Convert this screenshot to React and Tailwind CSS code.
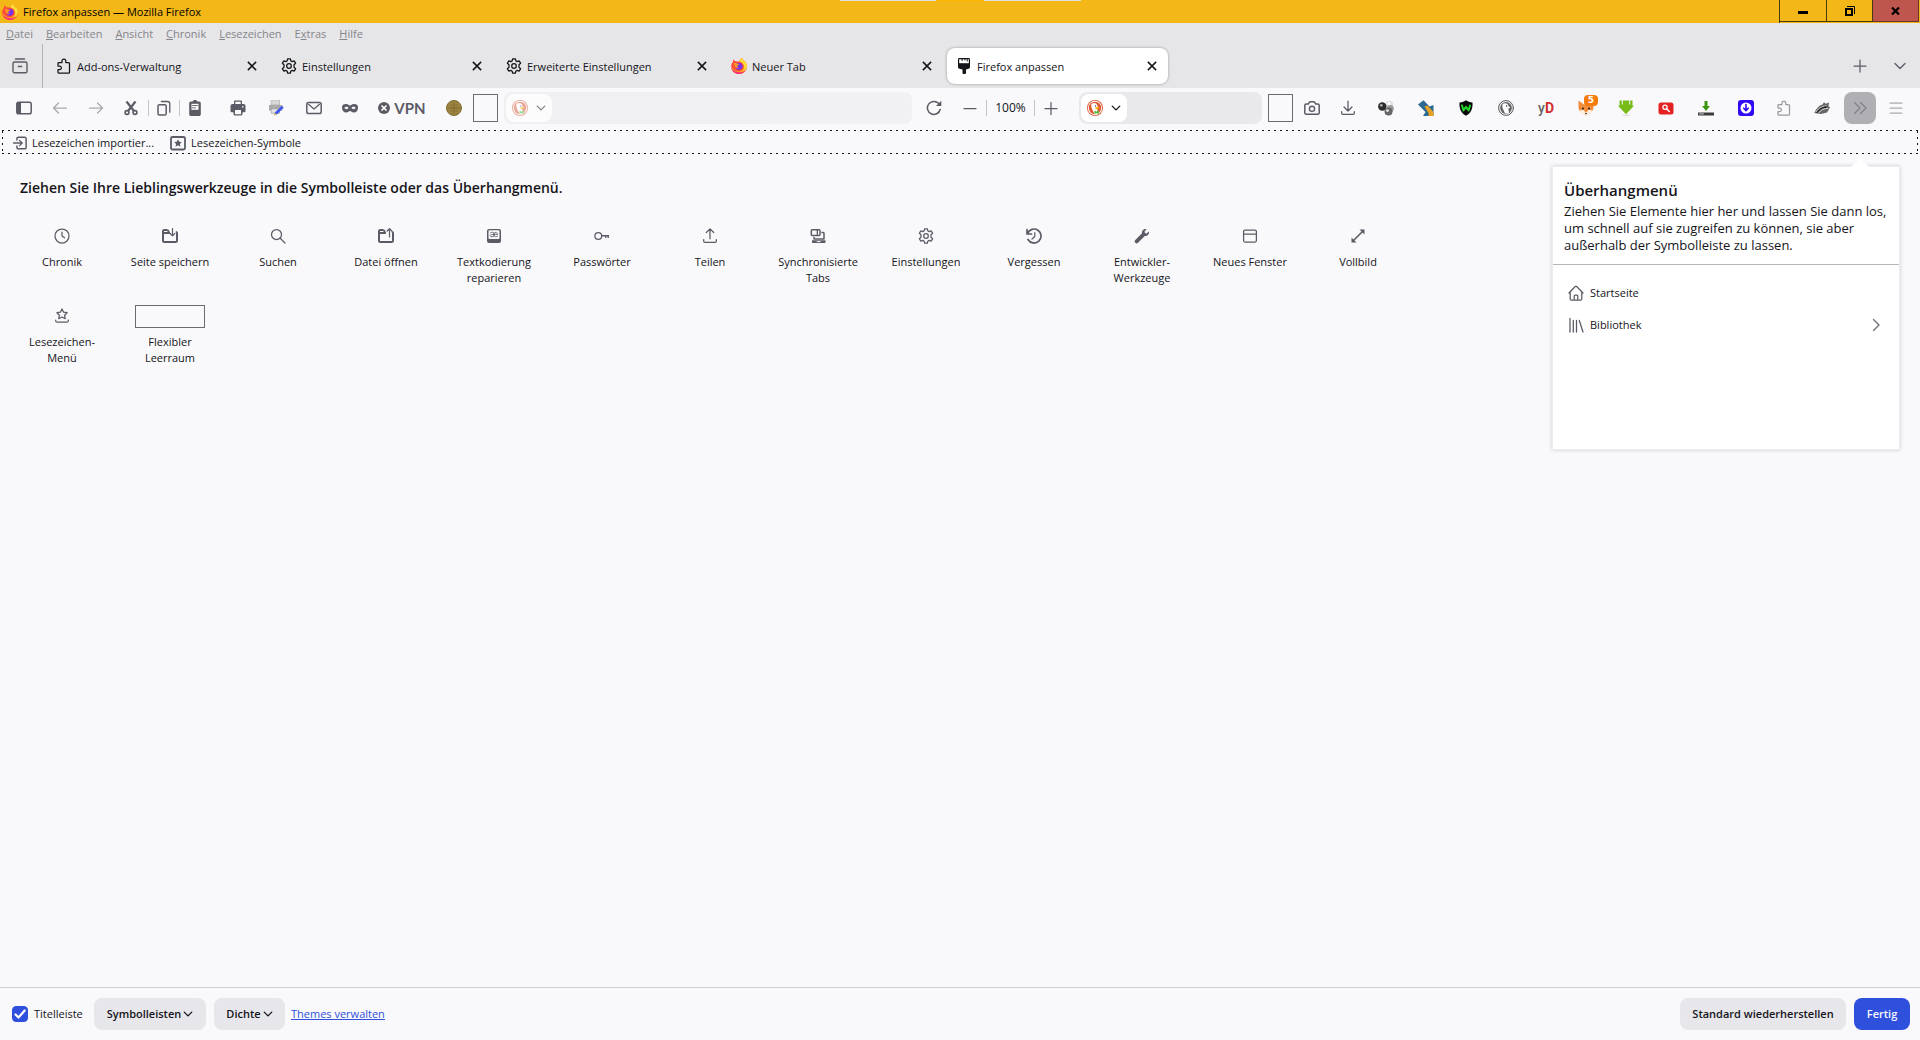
import React from "react";

function Svg({ children, className = "", size = "h-4 w-4" }) {
  return (
    <svg viewBox="0 0 16 16" className={`${size} shrink-0 ${className}`} fill="none" stroke="currentColor" strokeWidth="1.25" strokeLinecap="round" strokeLinejoin="round" aria-hidden="true">
      {children}
    </svg>
  );
}

const Firefox = () => (
  <Svg>
    <g stroke="none">
      <path d="M8 16c4.400 0 7.800-3.300 7.800-7.700 0-2.500-1-4.300-2.200-5.600.2.600.3 1.100.3 1.600C13 2.300 11.100 1.700 10.900 0 9.400.9 8.500 2.200 8.300 3.500 7 3.400 5.700 3.500 4.600 3.200 3.500 2.900 3 2 2.800 1.200 2 2 1.900 3 2 3.800.9 4.900.2 6.500.2 8.300.2 12.700 3.600 16 8 16z" fill="#ff4b3a" />
      <path d="M8 16c4.400 0 7.800-3.300 7.800-7.700 0-2.500-1-4.300-2.200-5.600.2.600.3 1.100.3 1.600C13 2.300 11.100 1.700 10.900 0 9.400.9 8.500 2.200 8.300 3.500c2.600.4 4.300 2.400 4.300 4.800 0 3-2.200 4.900-4.800 4.900S2.500 12 1.900 9.500L.5 10.500C1.300 13.700 4.300 16 8 16z" fill="#ff9a1f" />
      <path d="M10.900 0C9.400.9 8.500 2.200 8.300 3.500c3 .5 5.200 3 5 6-.1 1.600-.9 2.900-2 3.800 2.700-.8 4.500-2.900 4.500-5.600 0-2.100-1-3.800-2.200-5 .2.600.3 1.100.3 1.600C13 2.300 11.100 1.700 10.900 0z" fill="#ffdf3b" />
      <path d="M.4 10C1.200 13.500 4.300 16 8 16c3.200 0 5.900-1.700 7.100-4.300-1.700 2-4.200 2.800-7 2.600C4.500 14 2 12.500.4 10z" fill="#fb2d7c" />
      <circle cx="8" cy="8.300" r="3.400" fill="#7a32e8" />
      <path d="M2.600 5.500c1.200-.6 2.700-.5 3.500.3.700 0 1.700 0 2 .4-.2.700-1.400 1-1.700 1.300-.3.500-.1 1.700 1.300 2-1.300 1-3.600.2-3.900-1.700z" fill="#ff9a1f" />
    </g>
  </Svg>
);
const Puzzle = ({ className }) => (
  <Svg className={className}>
    <path d="M6 4.500V3a1.900 1.900 0 0 1 3.800 0v1.500h2.700a1 1 0 0 1 1 1v8.700a1 1 0 0 1-1 1H3a1 1 0 0 1-1-1v-2.700h1.700a1.700 1.700 0 0 0 0-3.400H2V5.500a1 1 0 0 1 1-1z" />
  </Svg>
);
const Gear = ({ className }) => (
  <Svg className={className}>
    <path d="M6.600.8h2.800l.4 2 1.300.8 2-.8 1.500 2.400-1.600 1.500v2.600l1.600 1.500-1.500 2.400-2-.8-1.300.8-.4 2H6.600l-.4-2-1.300-.8-2 .8-1.500-2.400L3 9.300V6.700L1.400 5.200l1.500-2.400 2 .8 1.300-.8z" />
    <circle cx="8" cy="8" r="2.300" />
  </Svg>
);
const Brush = () => (
  <Svg>
    <g stroke="none">
      <path d="M2 1.200A1.200 1.200 0 0 1 3.200 0h9.600A1.200 1.200 0 0 1 14 1.200V9c0 .8-.5 1.500-1.300 1.700L10 11.500V15a1 1 0 0 1-1 1H7.500a1 1 0 0 1-1-1v-3.500l-3.200-.8C2.500 10.500 2 9.800 2 9z" fill="#15141a" />
      <path d="M3.200 1.200h9.600v4H3.200z" fill="#fff" />
      <path d="M5.500 1h1.200v1.800H5.500zM8.300 1h1.200v1.200H8.300zM10.700 1h1v2.500h-1z" fill="#15141a" />
    </g>
  </Svg>
);
const CloseX = () => (
  <Svg size="h-3 w-3"><path d="M2.500 2.500l11 11M13.500 2.500l-11 11" strokeWidth="2" strokeLinecap="butt" /></Svg>
);
const ChevronDown = ({ className = "" }) => (
  <Svg className={className}><path d="M3 5.500l5 5 5-5" /></Svg>
);
const SmallChevron = ({ size = "h-[10px] w-[10px]" }) => (
  <Svg size={size}><path d="M2 5l6 6 6-6" strokeWidth="2.200" /></Svg>
);
const Duck = ({ className = "" }) => (
  <Svg className={className}>
    <g stroke="none">
      <circle cx="8" cy="8" r="8" fill="#de5833" />
      <circle cx="8" cy="8" r="7.200" fill="#fff" />
      <circle cx="8" cy="8" r="6.200" fill="#de5833" />
      <path d="M4.800 3.800C7 2.300 10 3 10.600 6c.3 1.500-.3 2.200-.3 3.500l.8 4.300c-1.300.5-3 .4-3.700 0C6.500 11.500 4.500 9 4.300 6.500c0-.9-.3-2 .5-2.700z" fill="#fff" />
      <circle cx="8.500" cy="6" r=".7" fill="#2d4f8e" />
      <path d="M8.500 7.300c1.600-.3 3.500-.3 3.800.3.200.8-2 1.600-3.800 1.800z" fill="#fdb50a" />
      <path d="M7.500 10.800l2 .8 2.500-.9v3l-2.500-.4-2 .6z" fill="#4cba3c" />
    </g>
  </Svg>
);
const MonoDuck = () => (
  <Svg>
    <circle cx="8" cy="8" r="7.400" stroke="#555" strokeWidth="1" />
    <circle cx="8" cy="8" r="5.900" fill="#666" stroke="none" />
    <path d="M4.700 4C7 2.300 10.300 3.200 10.600 6.200l1.800 1.200-2 1 .6 4.800c-1.300.6-3.300.5-4 0L5.500 10C4.300 8 4 5.500 4.700 4z" fill="#fff" stroke="none" />
    <circle cx="8.600" cy="6" r=".7" fill="#333" stroke="none" />
  </Svg>
);
const Clock = () => <Svg><circle cx="8" cy="8" r="7" /><path d="M8 4v4l2.500 1.800" /></Svg>;
const FolderDown = () => (
  <Svg>
    <path d="M5.500 2H2.300c-.7 0-1.300.6-1.300 1.300v9.400c0 .7.600 1.300 1.300 1.300h11.400c.7 0 1.300-.6 1.300-1.300V5.300c0-.7-.5-1.300-1.200-1.300M5.500 2l1.500 2M1.500 5H8" strokeWidth="2" strokeLinecap="butt" />
    <path d="M10.500.7v7M8.200 5.500l2.300 2.300 2.300-2.300" strokeWidth="1.200" />
  </Svg>
);
const FolderUp = () => (
  <Svg>
    <path d="M5.500 2H2.300c-.7 0-1.300.6-1.300 1.300v9.400c0 .7.600 1.300 1.300 1.300h11.400c.7 0 1.300-.6 1.300-1.300V5.300c0-.7-.5-1.300-1.200-1.300M5.500 2l1.500 2M1.500 5H8" strokeWidth="2" strokeLinecap="butt" />
    <path d="M11.500 9V.8M9.200 3l2.300-2.300L13.800 3" strokeWidth="1.200" />
  </Svg>
);
const Magnifier = () => <Svg><circle cx="6.500" cy="6.500" r="5" /><path d="M10.200 10.200l4.800 4.800" /></Svg>;
const TextCode = () => (
  <Svg>
    <path d="M3 1h10c1.100 0 2 .9 2 2v10c0 1.100-.9 2-2 2H3c-1.100 0-2-.9-2-2V3c0-1.100.9-2 2-2zm.5 1.300a1 1 0 0 0-1 1V10a1 1 0 0 0 1 1h9a1 1 0 0 0 1-1V3.300a1 1 0 0 0-1-1z" fill="currentColor" fillRule="evenodd" stroke="none" />
    <path d="M4.500 4.800C5.500 4 8 4 8 5.500V8c-1 1.200-3.700 1-3.700-.3S6 6.500 11.500 6.400C11.600 4 8 4 8 5.500M8 7.500c.5 1.500 2.500 1.500 3.500.8" strokeWidth=".9" />
  </Svg>
);
const Key = () => <Svg><circle cx="4.300" cy="8" r="3.400" /><path d="M7.700 7.800H15M14.200 8v2M11.700 8v1.700" strokeLinecap="butt" strokeWidth="1.400" /></Svg>;
const Share = () => <Svg><path d="M8 10.800V1M4.300 4.500L8 .9l3.700 3.600M1.700 11.500v1.700c0 .7.500 1.200 1.200 1.200h10.200c.7 0 1.200-.5 1.200-1.200v-1.700" /></Svg>;
const Synced = () => (
  <Svg>
    <rect x="1.300" y="1.800" width="8.700" height="5.700" rx="1" strokeWidth="1.500" />
    <path d="M7.300 2.500v4.500" strokeWidth="1.300" />
    <path d="M12 4.500h1.200c.5 0 .8.300.8.800V11H4V9.500" strokeWidth="1.500" />
    <path d="M2 12.300h13.500v2c0 .5-.3.800-.8.800H2.800c-.5 0-.8-.3-.8-.8z" fill="currentColor" stroke="none" />
    <path d="M7.200 13.600h3" stroke="#f9f9fb" strokeWidth="1" />
  </Svg>
);
const Forget = () => <Svg><path d="M1 1.500V6h4.500M1.500 5.600A7 7 0 1 1 2 11.500" strokeWidth="1.700" /><path d="M8.800 4.500v4L6 11" strokeWidth="1.200" /></Svg>;
const Wrench = () => <Svg><path d="M14.800 3.500l-2.600 2.300-1.900-1.900L12.500 1.300C10.500.5 7.500 2 8 5.200L1.300 12a1.900 1.900 0 0 0 2.700 2.700L10.800 8C14 8.500 15.600 5.500 14.800 3.500z" fill="currentColor" stroke="none" /></Svg>;
const NewWindow = () => <Svg><rect x="1.600" y="2" width="12.800" height="12" rx="1.500" /><path d="M2 6h12" /></Svg>;
const Fullscreen = () => <Svg><path d="M3.500 12.500l9-9" strokeWidth="1.600" /><path d="M9.500 1.500h5v5zM1.500 9.500v5h5z" fill="currentColor" stroke="none" /></Svg>;
const BookmarkMenu = () => (
  <Svg>
    <path d="M8 1l1.600 3.200 3.500.5-2.500 2.500.6 3.500L8 9l-3.200 1.700.6-3.500L2.900 4.700l3.500-.5z" />
    <path d="M1.700 12v.7c0 .9.700 1.500 1.500 1.500h9.600c.8 0 1.500-.6 1.500-1.500V12" />
  </Svg>
);

function ToolButton({ label, children, width = "w-9", className = "" }) {
  return (
    <button type="button" aria-label={label} title={label} className={`flex h-8 shrink-0 items-center justify-center text-[#5b5b66] ${width} ${className}`}>
      {children}
    </button>
  );
}

const Divider = () => <span className="h-4 w-px shrink-0 bg-[#c4c4c9]" />;

function EngineField({ label, width, faded = "" }) {
  return (
    <div className={`flex h-8 items-center rounded-lg bg-[#e9e9eb] p-[2px] ${width} ${faded}`}>
      <button type="button" aria-label={`${label}: Suchmaschine wählen`} className="flex h-7 w-[46px] shrink-0 items-center gap-2 rounded-lg bg-white pl-[6px] text-[#15141a]">
        <Duck />
        <SmallChevron />
      </button>
      <input aria-label={label} className="h-full min-w-0 flex-1 bg-transparent px-2 outline-none" />
    </div>
  );
}

const menus = [["", "D", "atei"], ["", "B", "earbeiten"], ["", "A", "nsicht"], ["", "C", "hronik"], ["", "L", "esezeichen"], ["E", "x", "tras"], ["", "H", "ilfe"]];

const tabs = [
  { title: "Add-ons-Verwaltung", icon: <Puzzle /> },
  { title: "Einstellungen", icon: <Gear /> },
  { title: "Erweiterte Einstellungen", icon: <Gear /> },
  { title: "Neuer Tab", icon: <Firefox /> },
  { title: "Firefox anpassen", icon: <Brush />, active: true },
];

const palette = [
  ["Chronik", <Clock />],
  ["Seite speichern", <FolderDown />],
  ["Suchen", <Magnifier />],
  ["Datei öffnen", <FolderUp />],
  ["Textkodierung reparieren", <TextCode />],
  ["Passwörter", <Key />],
  ["Teilen", <Share />],
  ["Synchronisierte Tabs", <Synced />],
  ["Einstellungen", <Gear />],
  ["Vergessen", <Forget />],
  ["Entwickler-Werkzeuge", <Wrench />],
  ["Neues Fenster", <NewWindow />],
  ["Vollbild", <Fullscreen />],
  ["Lesezeichen-Menü", <BookmarkMenu />],
  ["Flexibler Leerraum", <span className="h-[23px] w-[70px] shrink-0 border border-[#6b6b70]" />],
];

function TitleBar() {
  return (
    <header className="relative flex h-[23px] shrink-0 items-center bg-[#f3b718] pl-[2px] pr-px text-black">
      <Firefox />
      <h1 className="ml-[5px] flex-1">Firefox anpassen — Mozilla Firefox</h1>
      <div className="absolute left-[840px] top-0 flex h-px">
        <span className="w-24 bg-[#dfdfdf]" />
        <span className="w-12 bg-[#ffb400]" />
        <span className="w-[97px] bg-[#dfdfdf]" />
      </div>
      <div className="flex h-full border-l border-[#4a3a10]">
        <button type="button" aria-label="Minimieren" className="flex h-[22px] w-[47px] items-center justify-center border-b border-r border-[#4a3a10]">
          <span className="mt-1 h-[3px] w-[10px] bg-black" />
        </button>
        <button type="button" aria-label="Verkleinern" className="flex h-[22px] w-[46px] items-center justify-center border-b border-r border-[#4a3a10]">
          <svg viewBox="0 0 10 10" className="h-[10px] w-[10px]" fill="none" stroke="#000" aria-hidden="true">
            <path d="M1 3h6v6H1z" strokeWidth="2" /><path d="M2 .5h7.500V8" />
          </svg>
        </button>
        <button type="button" aria-label="Schließen" className="flex h-[22px] w-[46px] items-center justify-center border-b border-r border-[#6b332e] bg-[#bf564d]">
          <svg viewBox="0 0 9 8" className="h-2 w-[9px]" fill="none" stroke="#000" strokeWidth="2.200" aria-hidden="true"><path d="M1 .5l7 7M8 .5l-7 7" /></svg>
        </button>
      </div>
    </header>
  );
}

function TabStrip() {
  return (
    <div className="flex h-11 items-stretch text-[#15141a]">
      <ToolButton label="Tab-Archiv" width="w-10" className="mr-[2px] h-11">
        <Svg><path d="M3.500 1h9M1 5.500C1 4.700 1.700 4 2.500 4h11c.8 0 1.500.7 1.500 1.500v7.700c0 .8-.7 1.500-1.500 1.500h-11c-.8 0-1.500-.7-1.500-1.500zM6.300 8.500h3.400" strokeWidth="1.400" /></Svg>
      </ToolButton>
      <span className="w-px bg-[#b4b4b8]" />
      <div role="tablist" className="ml-[2px] flex">
        {tabs.map((t) => (
          <div key={t.title} role="tab" aria-selected={!!t.active} className={`mx-[2px] my-1 flex w-[221px] items-center rounded-lg pl-[9px] pr-[10px] ${t.active ? "bg-white shadow-[0_0_3px_rgba(0,0,0,0.35)]" : ""}`}>
            {t.icon}
            <span className="ml-[5px] flex-1 truncate pt-px">{t.title}</span>
            <button type="button" aria-label={`${t.title} schließen`}><CloseX /></button>
          </div>
        ))}
      </div>
      <div className="flex-1" />
      <ToolButton label="Neuer Tab" width="w-10" className="h-11"><Svg><path d="M8 2v12M2 8h12" /></Svg></ToolButton>
      <ToolButton label="Alle Tabs auflisten" width="w-10" className="h-11"><ChevronDown /></ToolButton>
    </div>
  );
}

function NavBar() {
  return (
    <nav aria-label="Navigation" className="flex h-[42px] shrink-0 items-center px-[6px] pb-[2px]">
      <ToolButton label="Seitenleiste"><Svg><rect x=".8" y="2.300" width="14.400" height="11.400" rx="1.800" strokeWidth="1.500" /><path d="M1 3h4v10H1z" fill="currentColor" stroke="none" /></Svg></ToolButton>
      <ToolButton label="Zurück" className="opacity-50"><Svg><path d="M14.500 8H1.500M6.500 3L1.500 8l5 5" /></Svg></ToolButton>
      <ToolButton label="Vor" className="opacity-50"><Svg><path d="M1.500 8h13M9.500 3l5 5-5 5" /></Svg></ToolButton>
      <ToolButton label="Ausschneiden" width="w-[34px]">
        <Svg><path d="M3.500 1.500l7.300 9.300M12.500 1.500L5.200 10.800" strokeWidth="2.200" strokeLinecap="butt" /><circle cx="4" cy="12.500" r="1.900" strokeWidth="1.600" /><circle cx="12" cy="12.500" r="1.900" strokeWidth="1.600" /></Svg>
      </ToolButton>
      <Divider />
      <ToolButton label="Kopieren" width="w-[30px]">
        <Svg><rect x="2" y="4.800" width="8.200" height="10.200" rx="1.500" strokeWidth="1.500" /><path d="M5.500 1.500h6c1.300 0 2.300 1 2.300 2.300v8.400" strokeWidth="1.300" /></Svg>
      </ToolButton>
      <Divider />
      <ToolButton label="Einfügen" width="w-[30px]">
        <Svg><g stroke="none"><path d="M5.500 1.500C5.800.6 6.800 0 8 0s2.200.6 2.500 1.500H12c1 0 1.800.8 1.800 1.800v10.900c0 1-.8 1.800-1.800 1.800H4c-1 0-1.800-.8-1.800-1.800V3.300c0-1 .8-1.800 1.800-1.800z" fill="currentColor" /><path d="M4.500 3.800h7v6h-7z" fill="#fff" /><path d="M5.500 5.500h5M5.500 7.800h3" stroke="currentColor" strokeWidth=".9" /></g></Svg>
      </ToolButton>
      <ToolButton label="Drucken" width="w-10" className="ml-2">
        <Svg><g stroke="none"><path d="M4 1.500C4 .9 4.400.5 5 .5h6c.6 0 1 .4 1 1V4h1.500A2 2 0 0 1 15.500 6v5a1.300 1.300 0 0 1-1.300 1.300H12.500V14c0 .8-.7 1.500-1.500 1.500H5A1.500 1.500 0 0 1 3.500 14v-1.700H1.800A1.300 1.300 0 0 1 .5 11V6a2 2 0 0 1 2-2H4z" fill="currentColor" /><path d="M5.300 1.800h5.400V4H5.300zM5 10h6v4.200H5z" fill="#f9f9fb" /><path d="M12 6.200h1.500v1.200H12z" fill="#fff" /></g></Svg>
      </ToolButton>
      <ToolButton label="Druckbereich bearbeiten">
        <Svg><g stroke="none"><path d="M3.500 0h8v5h-8z" fill="#d8d8d8" stroke="#aaa" strokeWidth=".7" /><path d="M1 5h13.500v5.500H1z" fill="#aaa" /><path d="M3.500 8.800h8v4.500h-8z" fill="#e4e4e4" stroke="#999" strokeWidth=".7" /><path d="M13.500 6l2.300 1.500-7 7-2.800 1 .7-2.700z" fill="#3c55ee" /><path d="M6.700 12.800l2.100 1.700-2.800 1z" fill="#f4d34a" /></g></Svg>
      </ToolButton>
      <ToolButton label="E-Mail" width="w-10"><Svg><rect x=".8" y="2.500" width="14.400" height="11" rx="1.800" strokeWidth="1.500" /><path d="M2.500 4.300L8 9l5.500-4.700" /></Svg></ToolButton>
      <ToolButton label="Privates Fenster" width="w-8">
        <Svg><path d="M4.300 4C2 4 0 4.600 0 7.500S1.500 12.500 4.300 12.500c1.900 0 2.600-1.500 3.700-1.500s1.800 1.500 3.700 1.500c2.800 0 4.300-2 4.300-5S14 4 11.700 4C9.800 4 9.200 5.400 8 5.400S6.200 4 4.300 4zm.2 2.800c1 0 1.700.5 2 1.300-.4.700-1.100 1.100-2 1.100s-1.700-.4-2.100-1.100c.4-.8 1.100-1.300 2.100-1.300zm7 0c1 0 1.700.5 2.100 1.300-.4.700-1.200 1.100-2.100 1.100s-1.600-.4-2-1.100c.3-.8 1-1.300 2-1.300z" fill="currentColor" fillRule="evenodd" stroke="none" /></Svg>
      </ToolButton>
      <button type="button" className="flex h-8 w-[72px] shrink-0 items-center justify-center gap-1 font-[Lato] text-[15px] font-bold text-[#5b5b66]">
        <Svg size="h-3 w-3"><circle cx="8" cy="8" r="8" fill="currentColor" stroke="none" /><path d="M5.300 5.300l5.400 5.400M10.700 5.300l-5.400 5.400" stroke="#fff" strokeWidth="2.200" /></Svg>
        VPN
      </button>
      <ToolButton label="Cookies" width="w-8"><Svg><circle cx="8" cy="8" r="7.500" fill="#9b8440" stroke="#81692b" strokeWidth="1" /><path d="M8 3v10M3 8h10M5 4.500l1 1M11 11.500l-1-1M11 4.500l-1 1M4.800 11.300l1-1" stroke="#7a632a" strokeWidth=".8" /></Svg></ToolButton>
      <span className="ml-[3px] h-7 w-[25px] shrink-0 border border-[#6b6b70]" />
      <EngineField label="Adresse" width="ml-[6px] mr-[3px] min-w-0 flex-1" faded="opacity-50" />
      <ToolButton label="Neu laden" width="w-[38px]"><Svg><path d="M14.200 9.500A6.500 6.500 0 1 1 12.500 3.300" strokeWidth="1.500" /><path d="M15.300.8V6H10z" fill="currentColor" stroke="none" /></Svg></ToolButton>
      <ToolButton label="Verkleinern" width="w-[33px]"><Svg><path d="M2 8.500h12" /></Svg></ToolButton>
      <Divider />
      <button type="button" className="h-8 w-[47px] shrink-0 text-xs text-[#15141a]">100%</button>
      <Divider />
      <ToolButton label="Vergrößern" width="w-[31px]"><Svg><path d="M8 2.500v12M2 8.500h12" /></Svg></ToolButton>
      <EngineField label="Suchen" width="ml-[13px] w-[183px] shrink-0" />
      <span className="ml-[6px] mr-px h-7 w-[25px] shrink-0 border border-[#6b6b70]" />
      <ToolButton label="Bildschirmfoto"><Svg><path d="M2.300 4h2l1-1.700c.2-.3.500-.5.900-.5h3.600c.4 0 .7.200.9.500l1 1.700h2c.8 0 1.500.7 1.500 1.500v7.200c0 .8-.7 1.500-1.500 1.500H2.300c-.8 0-1.500-.7-1.500-1.500V5.500C.8 4.700 1.500 4 2.300 4z" strokeWidth="1.500" /><circle cx="8" cy="8.800" r="2.600" strokeWidth="1.400" /></Svg></ToolButton>
      <ToolButton label="Downloads"><Svg><path d="M8 1v9.500M4 7l4 4 4-4M1.700 11.500v1.700c0 .7.500 1.200 1.200 1.200h10.200c.7 0 1.200-.5 1.200-1.200v-1.700" /></Svg></ToolButton>
      <ToolButton label="Kugeln" width="w-10"><Svg><g stroke="none"><circle cx="11.500" cy="4.500" r="3.700" fill="#dedede" /><circle cx="11" cy="3.500" r="1.500" fill="#fff" /><circle cx="12.300" cy="8.500" r="3.500" fill="#9a9a9a" /><circle cx="4.300" cy="6.500" r="4.200" fill="#2c2c2c" /><circle cx="3.300" cy="5.300" r="1.400" fill="#aaa" /><circle cx="10.500" cy="11.500" r="4" fill="#666" /><circle cx="9.500" cy="10.500" r="1.500" fill="#ddd" /></g></Svg></ToolButton>
      <ToolButton label="Pfeil" width="w-10"><Svg><path d="M0 4.500L5.500.3l6 6.300L15.500 5v11H5l2.500-4z" fill="#2d6a92" stroke="none" /><path d="M6.500 6.500L9.500 5.500l6 6.500v4H10l1-2z" fill="#e9a322" stroke="none" /></Svg></ToolButton>
      <ToolButton label="WOT" width="w-10"><Svg><path d="M1.500 2.500C4 2.300 6.500 1.300 8 .2c1.500 1.100 4 2.100 6.500 2.300C15 9 12.500 13.500 8 15.800 3.500 13.500 1 9 1.500 2.500z" fill="#080808" stroke="none" /><path d="M4 5.500l1.500 5L8 6.800l2.500 3.700 1.500-5" stroke="#20d82c" strokeWidth="2" /></Svg></ToolButton>
      <ToolButton label="DuckDuckGo" width="w-10"><MonoDuck /></ToolButton>
      <button type="button" className="h-8 w-10 shrink-0 font-[Roboto] text-sm font-medium text-[#666]">y<span className="font-bold text-[#cf2f2f]">D</span></button>
      <ToolButton label="Fuchs" width="w-10" className="relative">
        <Svg><g stroke="none"><path d="M.5.500L6 4.500h4L15.500.5v7l-.7 3L8 16 1.200 10.500.5 7.500z" fill="#f08c3c" /><path d="M1 10.500l4.500-.5L8 13l2.500-3 4.500.5L8 16z" fill="#fff4e4" /><circle cx="5" cy="8.500" r="1" fill="#222" /><circle cx="11" cy="8.500" r="1" fill="#222" /><path d="M6.800 13h2.400L8 14.500z" fill="#222" /></g></Svg>
        <span className="absolute left-[18px] top-[3px] h-[11px] w-[14px] rounded-sm bg-[#f57c0c] font-['DejaVu_Sans'] text-[9px] font-bold leading-[11px] text-white">5</span>
      </ToolButton>
      <ToolButton label="Video herunterladen" width="w-10"><Svg><path d="M1.500.5h2.300v4h1V.5h6.400v4h1V.5h2.300v5.300H16L8 14.200 0 5.800h1.500z" fill="#78ba18" stroke="none" /><path d="M5 15.300h6" stroke="#ccc" strokeWidth=".8" /></Svg></ToolButton>
      <ToolButton label="Suche" width="w-10"><Svg><rect x=".5" y="2.500" width="15" height="12" rx="2.500" fill="#e52222" stroke="none" /><circle cx="7" cy="7.300" r="2.100" stroke="#fff" strokeWidth="1.300" /><path d="M8.700 9l2.600 2.600" stroke="#fff" strokeWidth="1.400" /></Svg></ToolButton>
      <ToolButton label="Download-Leiste" width="w-10"><Svg><path d="M6.500 1h3v5H12l-4 5-4-5h2.500z" fill="#3c9612" stroke="none" /><path d="M0 12.500h16v3H0z" fill="#3a3a3a" stroke="none" /><path d="M1.500 13.900h4" stroke="#ddd" strokeWidth=".9" /></Svg></ToolButton>
      <ToolButton label="Download-Helfer" width="w-10"><Svg><rect width="16" height="16" rx="3" fill="#3208f5" stroke="none" /><circle cx="8" cy="8" r="5.500" fill="#fff" stroke="none" /><path d="M8 4.500V10M5.800 8.200L8 10.700l2.200-2.500" stroke="#3208f5" strokeWidth="1.600" /></Svg></ToolButton>
      <ToolButton label="Erweiterungen"><Puzzle className="opacity-60" /></ToolButton>
      <ToolButton label="Dachs" width="w-10"><Svg><path d="M.3 13C2 8.500 5 5.500 8.500 4.500L10 2.300l1.700 1.500L15 2.500 14.500 6l1.500 1.500-3 5L7 14z" fill="#666" stroke="none" /><path d="M2 11.700c2-3.200 5-4.900 10-6M5 12.500c2-2.500 4.500-4 8.800-4.200" stroke="#ddd" strokeWidth="1" /><path d="M3 12.500C5 9.500 7 8 11 7" stroke="#222" strokeWidth="1.200" /><circle cx="11.500" cy="7.300" r="1" fill="#111" stroke="none" /></Svg></ToolButton>
      <ToolButton label="Überhangmenü" width="w-8" className="mx-[2px] rounded-lg bg-[#b0b0b4]"><Svg className="text-[#818187]"><path d="M2.500 2.500L8 8l-5.500 5.500M8.500 2.500L14 8l-5.500 5.500" /></Svg></ToolButton>
      <ToolButton label="Menü" className="opacity-50"><Svg><path d="M2 3h12M2 8h12M2 13h12" /></Svg></ToolButton>
    </nav>
  );
}

const Dots = () => <span className="h-px shrink-0 bg-[repeating-linear-gradient(90deg,#15141a_0_2px,transparent_2px_6px)]" />;
const SideDots = () => <span className="w-px shrink-0 bg-[repeating-linear-gradient(180deg,#15141a_0_2px,transparent_2px_6px)]" />;

function BookmarksBar() {
  return (
    <div className="mx-[2px] flex flex-col">
      <Dots />
      <div className="flex h-[22px]">
        <SideDots />
        <div className="flex flex-1 items-center gap-4 pl-[10px] pt-px">
          <button type="button" className="flex items-center gap-[5px]">
            <Svg size="h-[14px] w-[14px]" className="text-[#5b5b66]"><path d="M4.500 4.500V3c0-1 .7-1.700 1.700-1.700h7.100c1 0 1.700.7 1.700 1.700v10c0 1-.7 1.700-1.700 1.700H6.200c-1 0-1.700-.7-1.700-1.700v-1.500" strokeWidth="1.700" /><path d="M.5 8h9.800M7.500 5l3 3-3 3" strokeWidth="1.500" /></Svg>
            Lesezeichen importier...
          </button>
          <button type="button" className="flex items-center gap-[5px]">
            <Svg className="text-[#5b5b66]"><rect x="1" y="2" width="14" height="12.500" rx="1.500" strokeWidth="1.800" /><path d="M8 4.200l1.200 2.500 2.700.3-2 1.900.6 2.800L8 10.300l-2.500 1.400.6-2.800-2-1.900 2.700-.3z" fill="currentColor" stroke="none" /></Svg>
            Lesezeichen-Symbole
          </button>
        </div>
        <SideDots />
      </div>
      <Dots />
    </div>
  );
}

function OverflowPanel() {
  return (
    <aside className="relative mr-5 mt-3 flex min-h-[284px] w-[348px] shrink-0 flex-col self-start border border-[#ececef] bg-white shadow-[0_0_4px_rgba(0,0,0,0.18)]">
      <svg viewBox="0 0 18 9" className="absolute -top-[9px] right-[30px] h-[9px] w-[18px]" fill="#fff" aria-hidden="true"><path d="M0 9L9 0l9 9z" /></svg>
      <div className="border-b border-[#b6b6ba] px-[11px] pb-[10px] pt-[11px]">
        <h2 className="text-[15px] font-semibold leading-6">Überhangmenü</h2>
        <p className="mt-px text-[13px] leading-[17px]">Ziehen Sie Elemente hier her und lassen Sie dann los, um schnell auf sie zugreifen zu können, sie aber außerhalb der Symbolleiste zu lassen.</p>
      </div>
      <div className="flex flex-col px-[15px] pt-3">
        <button type="button" className="flex h-8 items-center gap-[6px]">
          <Svg className="text-[#5b5b66]"><path d="M1 8l6.200-6.500c.4-.4 1.100-.4 1.500 0L15 8M2.200 7v7c0 .7.500 1.200 1.200 1.200h9.200c.7 0 1.200-.5 1.200-1.200V7M6.200 15v-4c0-.6.400-1 1-1h1.600c.6 0 1 .4 1 1v4" /></Svg>
          Startseite
        </button>
        <button type="button" className="flex h-8 items-center gap-[6px]">
          <Svg className="text-[#5b5b66]"><path d="M2 1.500V15M5.300 3.500V15M8.500 3.500V15M11.300 3.500L15 15" strokeWidth="1.300" /></Svg>
          <span className="flex-1 text-left">Bibliothek</span>
          <Svg className="text-[#6b6b73]"><path d="M5.500 2.500L11 8l-5.500 5.500" /></Svg>
        </button>
      </div>
    </aside>
  );
}

function Footer() {
  return (
    <footer className="flex shrink-0 items-center border-t border-[#cfcfd4] py-[10px] pl-3 pr-[10px]">
      <label className="flex w-[72px] items-center gap-[6px]">
        <span className="relative flex h-4 w-4">
          <input type="checkbox" defaultChecked className="h-4 w-4 appearance-none rounded-sm border border-[#8f8f9d] checked:border-[#2e50dc] checked:bg-[#2e50dc]" />
          <Svg className="pointer-events-none absolute inset-0 text-white"><path d="M3.500 8.500l3 3L12.700 4.500" strokeWidth="2.200" /></Svg>
        </span>
        Titelleiste
      </label>
      <button type="button" className="ml-[10px] flex h-8 min-w-28 items-center justify-center gap-[2px] rounded-lg bg-[#e7e7eb] px-3 font-semibold">Symbolleisten<SmallChevron /></button>
      <button type="button" className="ml-2 flex h-8 min-w-[71px] items-center justify-center gap-[2px] rounded-lg bg-[#e7e7eb] px-3 font-semibold">Dichte<SmallChevron /></button>
      <a href="#themes" className="ml-[6px] text-[#2e50dc] underline">Themes verwalten</a>
      <button type="button" className="ml-auto h-8 min-w-[166px] rounded-lg bg-[#e7e7eb] px-3 font-semibold">Standard wiederherstellen</button>
      <button type="button" className="ml-2 h-8 min-w-14 rounded-lg bg-[#2e50dc] px-3 font-semibold text-[#fbfbfe]">Fertig</button>
    </footer>
  );
}

export default function App() {
  return (
    <div className="flex min-h-screen flex-col bg-[#f9f9fb] font-['Open_Sans',sans-serif] text-[11px] leading-4 text-[#15141a]">
      <TitleBar />
      <div className="bg-[#e6e6e8]">
        <div role="menubar" className="flex h-[21px] items-center gap-[13px] pl-[6px] text-[#85858a]">
          {menus.map(([a, b, c]) => (
            <button key={b + c} type="button" role="menuitem">{a}<u>{b}</u>{c}</button>
          ))}
        </div>
        <TabStrip />
      </div>
      <NavBar />
      <BookmarksBar />
      <main className="flex flex-1">
        <section className="flex-1 pt-6">
          <h2 className="pl-5 text-[14px] font-semibold leading-5">Ziehen Sie Ihre Lieblingswerkzeuge in die Symbolleiste oder das Überhangmenü.</h2>
          <div className="mr-32 mt-4 flex flex-wrap pl-2">
            {palette.map(([label, icon]) => (
              <button key={label} type="button" className="flex h-20 w-[108px] flex-col items-center px-2">
                <span className="flex h-11 shrink-0 items-center text-[#5b5b66]">{icon}</span>
                <span className="mt-[-4px] px-1">{label}</span>
              </button>
            ))}
          </div>
        </section>
        <OverflowPanel />
      </main>
      <Footer />
    </div>
  );
}
